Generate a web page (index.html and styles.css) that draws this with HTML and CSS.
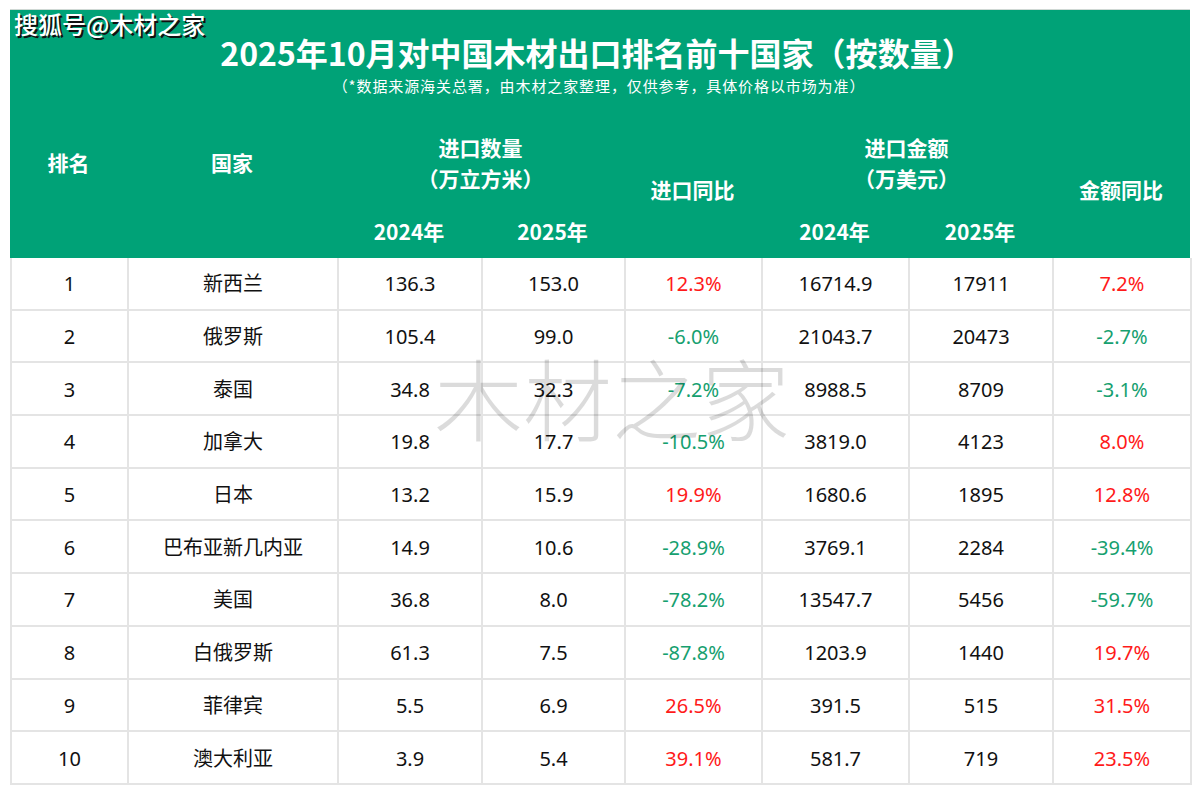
FILE: index.html
```html
<!DOCTYPE html>
<html lang="zh-CN">
<head>
<meta charset="utf-8">
<title>2025年10月对中国木材出口排名前十国家</title>
<link rel="stylesheet" href="styles.css">
</head>
<body>
<div class="sheet">
  <div class="brand">搜狐号@木材之家</div>
  <div class="banner">
    <div class="titles">
      <h1 class="title">2025年10月对中国木材出口排名前十国家（按数量）</h1>
      <p class="subtitle">（*数据来源海关总署，由木材之家整理，仅供参考，具体价格以市场为准）</p>
    </div>
    <div class="head-grid">
      <div class="hc h-rank">排名</div>
      <div class="hc h-country">国家</div>
      <div class="hc h-qty">进口数量<br>（万立方米）</div>
      <div class="hc h-qty-yoy">进口同比</div>
      <div class="hc h-amt">进口金额<br>（万美元）</div>
      <div class="hc h-amt-yoy">金额同比</div>
      <div class="hc h-q24">2024年</div>
      <div class="hc h-q25">2025年</div>
      <div class="hc h-a24">2024年</div>
      <div class="hc h-a25">2025年</div>
    </div>
  </div>
  <div class="body-grid">
    <div class="c">1</div><div class="c">新西兰</div><div class="c">136.3</div><div class="c">153.0</div><div class="c up">12.3%</div><div class="c">16714.9</div><div class="c">17911</div><div class="c up">7.2%</div>
    <div class="c">2</div><div class="c">俄罗斯</div><div class="c">105.4</div><div class="c">99.0</div><div class="c down">-6.0%</div><div class="c">21043.7</div><div class="c">20473</div><div class="c down">-2.7%</div>
    <div class="c">3</div><div class="c">泰国</div><div class="c">34.8</div><div class="c">32.3</div><div class="c down">-7.2%</div><div class="c">8988.5</div><div class="c">8709</div><div class="c down">-3.1%</div>
    <div class="c">4</div><div class="c">加拿大</div><div class="c">19.8</div><div class="c">17.7</div><div class="c down">-10.5%</div><div class="c">3819.0</div><div class="c">4123</div><div class="c up">8.0%</div>
    <div class="c">5</div><div class="c">日本</div><div class="c">13.2</div><div class="c">15.9</div><div class="c up">19.9%</div><div class="c">1680.6</div><div class="c">1895</div><div class="c up">12.8%</div>
    <div class="c">6</div><div class="c">巴布亚新几内亚</div><div class="c">14.9</div><div class="c">10.6</div><div class="c down">-28.9%</div><div class="c">3769.1</div><div class="c">2284</div><div class="c down">-39.4%</div>
    <div class="c">7</div><div class="c">美国</div><div class="c">36.8</div><div class="c">8.0</div><div class="c down">-78.2%</div><div class="c">13547.7</div><div class="c">5456</div><div class="c down">-59.7%</div>
    <div class="c">8</div><div class="c">白俄罗斯</div><div class="c">61.3</div><div class="c">7.5</div><div class="c down">-87.8%</div><div class="c">1203.9</div><div class="c">1440</div><div class="c up">19.7%</div>
    <div class="c">9</div><div class="c">菲律宾</div><div class="c">5.5</div><div class="c">6.9</div><div class="c up">26.5%</div><div class="c">391.5</div><div class="c">515</div><div class="c up">31.5%</div>
    <div class="c">10</div><div class="c">澳大利亚</div><div class="c">3.9</div><div class="c">5.4</div><div class="c up">39.1%</div><div class="c">581.7</div><div class="c">719</div><div class="c up">23.5%</div>
  </div>
  <div class="watermark">木材之家</div>
</div>
</body>
</html>
```

FILE: styles.css
```css
html, body {
  margin: 0;
  padding: 0;
  background: #ffffff;
}

body {
  font-family: "Noto Sans", "Noto Sans CJK SC", sans-serif;
  color: #111111;
}

.sheet {
  position: relative;
  width: 1180px;
  margin: 9px 0 0 10px;
}

.brand {
  position: absolute;
  left: 4px;
  top: 0;
  font-family: "Noto Sans CJK SC", sans-serif;
  font-size: 24px;
  line-height: 30px;
  font-weight: 500;
  color: #ffffff;
  text-shadow: 2px 2px 0.5px #111111;
  z-index: 2;
}

.banner {
  background: #00a277;
  border-top: 1px solid #cfd8d4;
  color: #ffffff;
  font-family: "Noto Sans CJK SC", sans-serif;
}

.titles {
  height: 110px;
  box-sizing: border-box;
  padding-top: 22px;
  text-align: center;
}

.title {
  margin: 0;
  padding-right: 6px;
  font-size: 32px;
  line-height: 40px;
  font-weight: 700;
}

.subtitle {
  margin: 4px 0 0;
  padding-right: 2px;
  font-size: 15px;
  line-height: 20px;
  letter-spacing: 0.9px;
  font-weight: 400;
}

.head-grid {
  display: grid;
  grid-template-columns: 117px 210px 144px 143px 137px 147px 144px 138px;
  grid-template-rows: 85px 53px;
}

.hc {
  display: flex;
  align-items: center;
  justify-content: center;
  text-align: center;
  font-size: 21px;
  line-height: 31px;
  font-weight: 700;
}

.h-rank { grid-column: 1; grid-row: 1; }
.h-country { grid-column: 2; grid-row: 1; }
.h-qty { grid-column: 3 / 5; grid-row: 1; }
.h-qty-yoy { grid-column: 5; grid-row: 1 / 3; }
.h-amt { grid-column: 6 / 8; grid-row: 1; }
.h-amt-yoy { grid-column: 8; grid-row: 1 / 3; }
.h-q24 { grid-column: 3; grid-row: 2; }
.h-q25 { grid-column: 4; grid-row: 2; }
.h-a24 { grid-column: 6; grid-row: 2; }
.h-a25 { grid-column: 7; grid-row: 2; }

.body-grid {
  display: grid;
  grid-template-columns: 117px 210px 144px 143px 137px 147px 144px 138px;
  grid-auto-rows: 52.7px;
  border-left: 2px solid #e4e4e4;
}

.c {
  display: flex;
  align-items: center;
  justify-content: center;
  padding-top: 2px;
  border-right: 2px solid #e4e4e4;
  border-bottom: 2px solid #e4e4e4;
  font-size: 20px;
  line-height: 24px;
  color: #111111;
}

.c.up {
  color: #ff1a1a;
}

.c.down {
  color: #16a06f;
}

.watermark {
  position: absolute;
  left: 424px;
  top: 337px;
  font-family: "Noto Sans CJK SC", sans-serif;
  font-size: 89px;
  line-height: 100px;
  font-weight: 300;
  color: rgba(0, 0, 0, 0.14);
  pointer-events: none;
}
```
